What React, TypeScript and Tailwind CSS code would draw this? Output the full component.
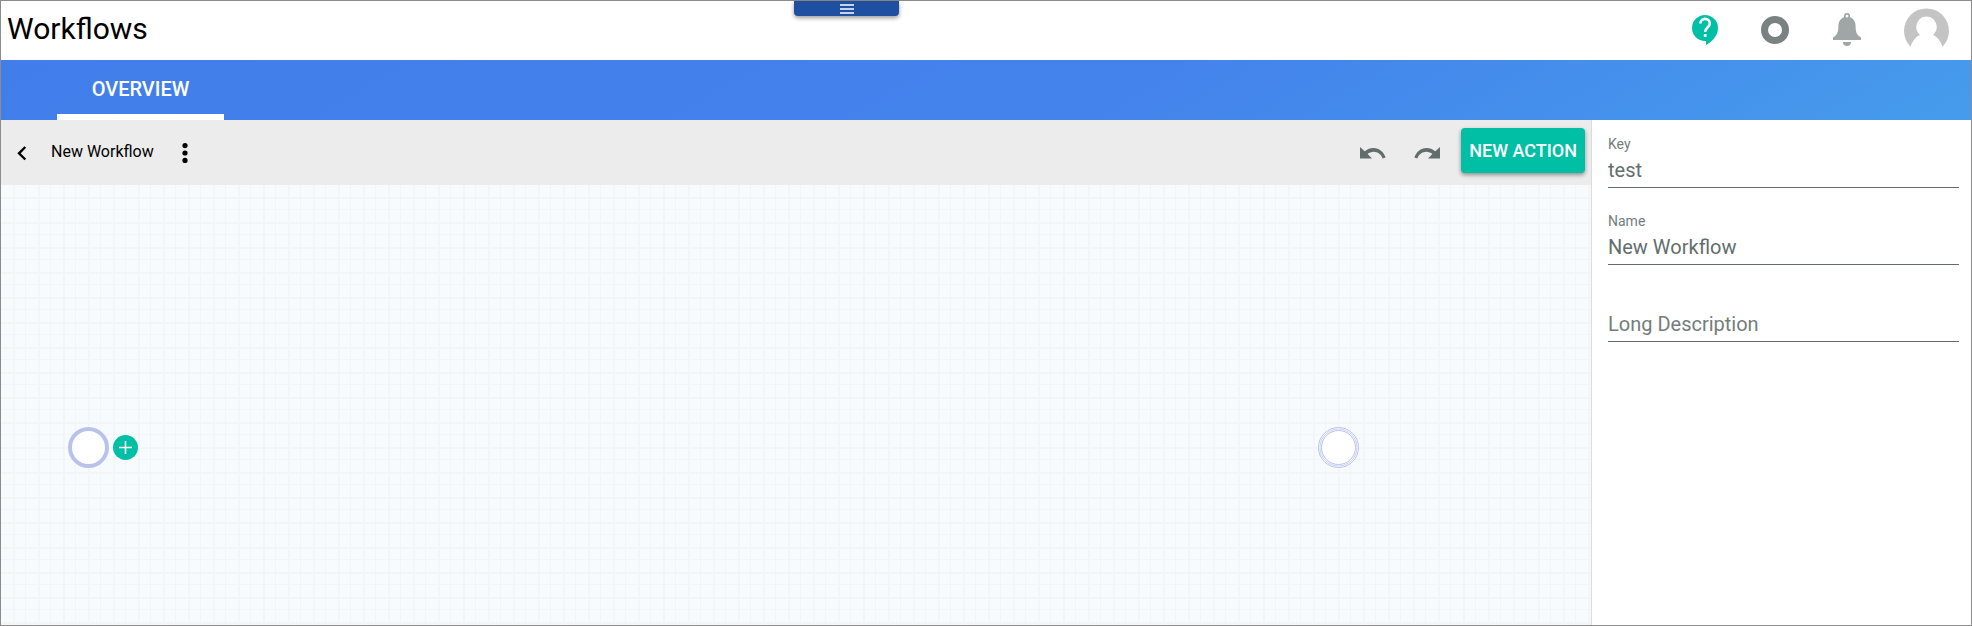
import { useState } from "react";

function HelpIcon() {
  return (
    <svg className="h-[30px] w-[26px]" viewBox="0 0 26 30" aria-hidden="true">
      <path fill="#00bfa5" d="M13 0a13 13 0 1 0 0 26h1v4c6-3 12-9.500 12-17A13 13 0 0 0 13 0Z" />
      <path fill="none" stroke="#fff" strokeWidth="2.600" d="M8.400 8.600a4.700 4.700 0 0 1 9.400 0c0 3.400-4.700 4-4.700 8.400" />
      <path fill="#fff" d="M11.800 19h2.800v2.800h-2.800z" />
    </svg>
  );
}

function BellIcon() {
  return (
    <svg className="h-[34px] w-[28px]" viewBox="0 0 28 34" aria-hidden="true">
      <path
        fill="#9fa6a5"
        fillRule="evenodd"
        d="M14 0a3 3 0 0 0-3 3v1.200C7.500 5.500 5.400 8.600 5.400 13c0 6-1 9-5.400 11.500V27h28v-2.500C23.600 22 22.600 19 22.600 13c0-4.400-2.100-7.500-5.600-8.800V3a3 3 0 0 0-3-3Zm0 1.800a1.400 1.400 0 0 1 0 2.800 1.400 1.400 0 0 1 0-2.800ZM10 29h8a4 4 0 0 1-8 0Z"
      />
    </svg>
  );
}

function Avatar() {
  return (
    <svg className="h-[45px] w-[45px]" viewBox="0 0 45 45" aria-hidden="true">
      <path
        fill="#c4c4c4"
        fillRule="evenodd"
        d="M6.500 38.700A22.500 22.500 0 1 1 38.500 38.700C36.500 32.500 33.500 29 29 26.900A10.300 10.300 0 1 0 16 26.900C11.500 29 8.500 32.500 6.500 38.700Z"
      />
    </svg>
  );
}

function Header() {
  return (
    <header className="flex h-[59px] items-start justify-between bg-white">
      <h1 className="flex-[3_1_0%] pt-2 pl-1.5 text-[30px] leading-10 font-normal text-black">Workflows</h1>
      <button
        aria-label="Toggle menu"
        className="flex h-[15px] w-[105px] items-center justify-center rounded-b bg-[#1e4fa0] shadow-[0_2px_4px_rgba(0,0,0,0.4)]"
      >
        <svg className="h-[10px] w-[14px]" viewBox="0 0 14 10" aria-hidden="true">
          <path stroke="#fff" strokeWidth="1.300" d="M0 1h14M0 5h14M0 9h14" />
        </svg>
      </button>
      <div className="flex h-[58px] flex-[4_1_0%] items-center justify-end pr-[22px]">
        <button aria-label="Help" className="mr-[43px]">
          <HelpIcon />
        </button>
        <button aria-label="Status" className="mr-11">
          <span className="block size-7 rounded-full border-[7px] border-[#7a8281]" />
        </button>
        <button aria-label="Notifications" className="mr-[43px]">
          <BellIcon />
        </button>
        <button aria-label="Account">
          <Avatar />
        </button>
      </div>
    </header>
  );
}

function Toolbar() {
  return (
    <div className="flex h-[65px] items-center bg-[#ececec]">
      <button aria-label="Back" className="ml-4">
        <svg className="h-4 w-[10px]" viewBox="0 0 10 16" aria-hidden="true">
          <path fill="none" stroke="#000" strokeWidth="2.400" d="M8.300 2 2 8.300l6.300 6.200" />
        </svg>
      </button>
      <span className="ml-6 pb-0.5 text-base text-black">New Workflow</span>
      <button aria-label="More options" className="ml-7">
        <svg className="h-5 w-[6px]" viewBox="0 0 6 20" aria-hidden="true">
          <circle cx="3" cy="2.600" r="2.600" />
          <circle cx="3" cy="10" r="2.600" />
          <circle cx="3" cy="17.400" r="2.600" />
        </svg>
      </button>
      <div className="ml-auto flex items-center pr-1.5">
        <button aria-label="Undo" className="mr-7">
          <svg className="h-3 w-[26px]" viewBox="0 0 26 12" aria-hidden="true">
            <path
              fill="#636e6c"
              d="M13.500 1C10.200 1 7.100 2.200 4.700 4.300L0 0v11.500h12L7.600 7.100c1.600-1.400 3.700-2.300 6-2.300 4.200 0 7.700 2.800 9 6.700l3-1C23.900 5 19.100 1 13.500 1Z"
            />
          </svg>
        </button>
        <button aria-label="Redo" className="mr-[21px]">
          <svg className="h-3 w-[26px]" viewBox="0 0 26 12" aria-hidden="true">
            <path
              fill="#636e6c"
              d="M12.500 1c3.300 0 6.400 1.200 8.800 3.300L26 0v11.500H14l4.400-4.400c-1.600-1.400-3.700-2.300-6-2.300-4.200 0-7.700 2.800-9 6.700l-3-1C2.100 5 6.900 1 12.500 1Z"
            />
          </svg>
        </button>
        <button className="mb-1 h-[45px] rounded bg-[#00bfa5] px-2 text-lg font-medium whitespace-nowrap text-white shadow-[0_2px_4px_rgba(0,0,0,0.4)]">
          NEW ACTION
        </button>
      </div>
    </div>
  );
}

function Canvas() {
  return (
    <div className="relative flex-1 bg-[#f8fbfe] bg-[linear-gradient(90deg,transparent_12px,#f3f5f7_12px,#f3f5f7_14px,transparent_14px,transparent_24px,#f3f5f7_24px),linear-gradient(transparent_12px,#f3f5f7_12px,#f3f5f7_14px,transparent_14px,transparent_24px,#f3f5f7_24px)] bg-[size:25px_25px]">
      <div className="absolute top-[242px] left-[67px] size-[41px] rounded-full border-4 border-[#b9c2eb] bg-white" />
      <button
        aria-label="Add step"
        className="absolute top-[250px] left-[112px] flex size-[25px] items-center justify-center rounded-full bg-[#00bfa5]"
      >
        <svg className="size-[13px]" viewBox="0 0 13 13" aria-hidden="true">
          <path stroke="#fff" strokeWidth="1.600" d="M0 6.500h13M6.500 0v13" />
        </svg>
      </button>
      <svg className="absolute top-[242px] left-[1317px] size-[41px]" viewBox="0 0 41 41" aria-hidden="true">
        <circle cx="20.500" cy="20.500" r="20" fill="#fff" stroke="#b9c2eb" />
        <circle cx="20.500" cy="20.500" r="18.500" fill="none" stroke="#b9c2eb" strokeWidth="0.800" />
        <circle cx="20.500" cy="20.500" r="17" fill="none" stroke="#b9c2eb" />
      </svg>
    </div>
  );
}

function Field({ id, label, initial }: { id: string; label: string; initial: string }) {
  const [value, setValue] = useState(initial);
  return (
    <div className="mb-[23px] flex h-[54px] flex-col border-b border-[#636e6c] last:mb-0">
      {value !== "" && (
        <label htmlFor={id} className="text-sm leading-5 text-[#737d7b]">
          {label}
        </label>
      )}
      <input
        id={id}
        value={value}
        aria-label={label}
        placeholder={label}
        onChange={(e) => setValue(e.target.value)}
        className="mt-auto mb-0.5 h-[30px] w-full bg-transparent text-xl text-[#636e6c] outline-none placeholder:text-[#737d7b]"
      />
    </div>
  );
}

export default function App() {
  return (
    <div className="flex min-h-screen flex-col border border-[#8c8c8c] bg-white font-['Roboto',sans-serif]">
      <Header />
      <nav className="flex h-[60px] bg-[linear-gradient(150deg,#427eeb_0%,#4482ec_55%,#448aec_70%,#469cec_100%)] pl-14">
        <a
          href="#overview"
          className="flex w-[167px] items-center justify-center border-b-[6px] border-white pt-1 text-xl font-medium text-white"
        >
          OVERVIEW
        </a>
      </nav>
      <div className="flex flex-1">
        <main className="flex flex-1 flex-col">
          <Toolbar />
          <Canvas />
        </main>
        <aside className="w-[380px] border-l border-[#dcdcdc] bg-white pt-3.5 pr-3 pl-4">
          <form>
            <Field id="key" label="Key" initial="test" />
            <Field id="name" label="Name" initial="New Workflow" />
            <Field id="description" label="Long Description" initial="" />
          </form>
        </aside>
      </div>
    </div>
  );
}
